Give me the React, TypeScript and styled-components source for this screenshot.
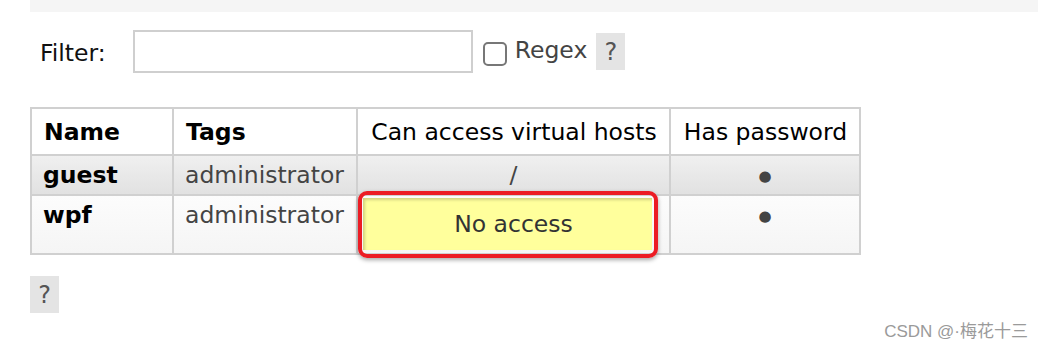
import React from "react";
import styled, { createGlobalStyle } from "styled-components";

const Global = createGlobalStyle`
  html, body { margin: 0; padding: 0; background: #fff; }
  body { font-family: "DejaVu Sans", Verdana, sans-serif; font-size: 23.5px; color: #111; }
`;

const Page = styled.div`
  position: relative;
  width: 1038px;
  height: 352px;
  overflow: hidden;
  padding-left: 30px;
  box-sizing: border-box;
`;

const TopBar = styled.div`
  height: 12px;
  background: #f5f5f5;
`;

const FilterRow = styled.div`
  display: flex;
  align-items: center;
  margin-top: 18px;
  padding-left: 10px;
  height: 43px;
`;

const Label = styled.label`
  color: #111;
  margin-right: 27px;
  margin-top: 3px;
`;

const Input = styled.div`
  width: 340px;
  height: 43px;
  box-sizing: border-box;
  border: 2px solid #cfcfcf;
  background: #fff;
`;

const Check = styled.span`
  width: 24px;
  height: 24px;
  box-sizing: border-box;
  border: 2px solid #777;
  border-radius: 5px;
  margin-left: 10px;
  margin-top: 5px;
`;

const CheckLabel = styled.span`
  color: #444;
  margin-left: 8px;
  margin-top: -3px;
`;

const Help = styled.span<{ $ml?: number }>`
  display: inline-flex;
  align-items: center;
  justify-content: center;
  width: 29px;
  height: 37px;
  background: #e4e4e4;
  color: #555;
  font-size: 24px;
  margin-left: ${(p) => p.$ml ?? 0}px;
`;

const Table = styled.table`
  margin-top: 34px;
  border-collapse: collapse;
  border: 2px solid #d0d0d0;
  table-layout: fixed;
  width: 829px;
`;

const Th = styled.th<{ $bold?: boolean }>`
  font-weight: ${(p) => (p.$bold ? "bold" : "normal")};
  text-align: ${(p) => (p.$bold ? "left" : "center")};
  color: #000;
  padding: 0 11px 0 12px;
  height: 45px;
  line-height: 28px;
  border: 2px solid #d0d0d0;
  white-space: nowrap;
  background: #fff;
`;

const Tr = styled.tr<{ $alt?: boolean }>`
  background: ${(p) =>
    p.$alt
      ? "linear-gradient(#f0f0f0, #e1e1e1)"
      : "linear-gradient(#fcfcfc, #f5f5f5)"};
`;

const Td = styled.td<{ $name?: boolean; $center?: boolean; $tall?: boolean }>`
  font-weight: ${(p) => (p.$name ? "bold" : "normal")};
  color: ${(p) => (p.$name ? "#000" : "#444")};
  text-align: ${(p) => (p.$center ? "center" : "left")};
  vertical-align: top;
  padding: ${(p) => (p.$tall ? "2px 17px 3px 5px" : "5px 11px 4px 11px")};
  line-height: 28px;
  border: 1px solid #d0d0d0;
  border-width: 2px 2px 0 2px;
  white-space: nowrap;
  height: ${(p) => (p.$tall ? "auto" : "28px")};
`;

const Warn = styled.div`
  position: relative;
  height: 52px;
  line-height: 52px;
  background: #ffff9c;
  color: #333;
  text-align: center;
  padding-left: 12px;
  box-shadow: inset 2px 2px 3px rgba(0, 0, 0, 0.18);
`;

const Annotation = styled.div`
  position: absolute;
  left: -5px;
  top: -7px;
  width: 300px;
  height: 67px;
  box-sizing: border-box;
  border: 4.5px solid #ec1c24;
  border-radius: 9px;
  box-shadow: 0 2px 4px rgba(0, 0, 0, 0.35);
  pointer-events: none;
`;

const Bullet = styled.span`
  font-size: 15px;
  color: #444;
  vertical-align: 2px;
`;

const Watermark = styled.div`
  position: absolute;
  right: 10px;
  bottom: 10px;
  font-family: "Liberation Sans", "Noto Sans CJK SC", sans-serif;
  font-size: 17px;
  color: #9a9a9a;
`;

export default function App() {
  return (
    <>
      <Global />
      <Page>
        <TopBar />
        <FilterRow>
          <Label>Filter:</Label>
          <Input />
          <Check />
          <CheckLabel>Regex</CheckLabel>
          <Help $ml={9}>?</Help>
        </FilterRow>
        <Table>
          <colgroup>
            <col style={{ width: 142 }} />
            <col style={{ width: 184 }} />
            <col style={{ width: 313 }} />
            <col style={{ width: 190 }} />
          </colgroup>
          <thead>
            <tr>
              <Th $bold>Name</Th>
              <Th $bold>Tags</Th>
              <Th>Can access virtual hosts</Th>
              <Th>Has password</Th>
            </tr>
          </thead>
          <tbody>
            <Tr $alt>
              <Td $name>guest</Td>
              <Td>administrator</Td>
              <Td $center>/</Td>
              <Td $center>
                <Bullet>●</Bullet>
              </Td>
            </Tr>
            <Tr>
              <Td $name>wpf</Td>
              <Td>administrator</Td>
              <Td $tall>
                <Warn>
                  No access
                  <Annotation />
                </Warn>
              </Td>
              <Td $center>
                <Bullet>●</Bullet>
              </Td>
            </Tr>
          </tbody>
        </Table>
        <Help style={{ marginTop: 21 }}>?</Help>
        <Watermark>CSDN @·梅花十三</Watermark>
      </Page>
    </>
  );
}
